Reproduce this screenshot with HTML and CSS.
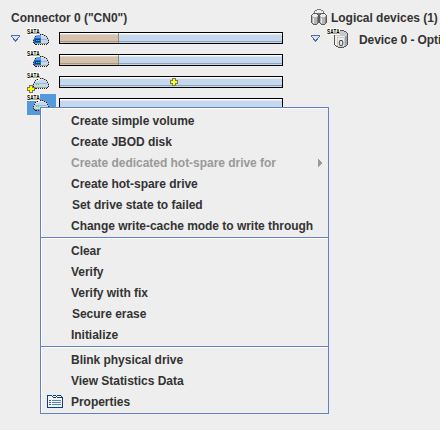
FILE: index.html
```
<!DOCTYPE html>
<html lang="en">
<head>
<meta charset="utf-8">
<title>Storage Manager</title>
<link rel="stylesheet" href="styles.css">
</head>
<body>
<svg class="defs" width="0" height="0" aria-hidden="true">
  <symbol id="dome" viewBox="0 0 16 11">
    <path fill="#c6d8ed" d="M5 0h6v1h2v1h1v2h1v6H1V4h1V2h1V1h2z"/>
    <path fill="#e6eef7" d="M5 1h5v1H5zM3 2h3v1H3z"/>
    <path fill="#9bb5db" d="M2 5h12v1H2z"/>
    <path fill="#a8a48c" d="M5 0h6v1H5zM3 1h1v1H3zM12 1h1v1h-1zM1 3h1v1H1zM14 3h1v1h-1zM0 5h1v1H0zM15 5h1v1h-1zM0 7h1v1H0zM15 7h1v1h-1zM2 9h12v1H2z"/>
    <path fill="#202020" d="M5 0h1v1H5zM7 0h1v1H7zM9 0h1v1H9zM4 1h1v1H4zM11 1h1v1h-1zM2 2h1v1H2zM13 2h1v1h-1zM1 4h1v1H1zM14 4h1v1h-1zM0 6h1v1H0zM15 6h1v1h-1zM0 8h1v1H0zM15 8h1v1h-1zM1 9h1v1H1zM14 9h1v1h-1zM2 10h2v1H2zM5 10h1v1H5zM7 10h1v1H7zM9 10h1v1H9zM11 10h1v1h-1zM13 10h1v1h-1z"/>
  </symbol>
  <symbol id="lights" viewBox="0 0 16 11"><path fill="#00ff30" d="M3 6h1v1H3zM5 6h1v1H5z"/></symbol>
  <symbol id="used" viewBox="0 0 16 11"><path fill="#58a2ff" d="M4 1h4v4H2V3h1V2h1z"/><path fill="#2468d8" d="M1 4h7v5H1z"/><path fill="#073a98" d="M2 5h5v3H2z"/><path fill="#1a8a70" d="M3 6h4v1H3z"/></symbol>
  <symbol id="plus" viewBox="0 0 8 8"><path fill="#74776c" d="M2 0h4v2h2v4H6v2H2V6H0V2h2z"/><path fill="#ffff00" d="M3 1h2v2h2v2H5v2H3V5H1V3h2z"/></symbol>
  <symbol id="twist" viewBox="0 0 9 7"><path fill="#536ba5" d="M0 0h9v2H8v1H7v2H6v1H5v1H4V6H3V5H2V3H1V2H0z"/><path fill="#d8e4f8" d="M1 1h7v1H7v1H6v1H5v1H4V4H3V3H2V2H1z"/></symbol>
</svg>
<main class="panes">
  <section class="pane connector">
    <h1 class="title">Connector 0 ("CN0")</h1>
    <div class="row">
      <svg class="twist"><use href="#twist"/></svg>
      <span class="icon"><span class="tag"><b>SATA</b></span><svg class="drive"><use href="#dome"/><use href="#used"/><use href="#lights"/></svg></span>
      <span class="bar"><i class="taken"></i></span>
    </div>
    <div class="row">
      <span class="twist"></span>
      <span class="icon"><span class="tag"><b>SATA</b></span><svg class="drive"><use href="#dome"/><use href="#used"/><use href="#lights"/></svg></span>
      <span class="bar"><i class="taken"></i></span>
    </div>
    <div class="row">
      <span class="twist"></span>
      <span class="icon"><span class="tag"><b>SATA</b></span><svg class="drive"><use href="#dome"/><use href="#lights"/></svg><svg class="spare"><use href="#plus"/></svg></span>
      <span class="bar"><svg class="plus"><use href="#plus"/></svg></span>
    </div>
    <div class="row">
      <span class="twist"></span>
      <span class="icon selected"><span class="tag"><b>SATA</b></span><svg class="drive"><use href="#dome"/><use href="#lights"/></svg></span>
      <span class="bar"></span>
    </div>
  </section>
  <section class="pane logical">
    <div class="head">
      <svg class="disks" viewBox="0 0 16 16">
        <path fill="#777" d="M6 0h4v1h2v1h1v4H3V2h1V1h2z"/><path fill="#eee" d="M6 1h4v1h2v2H4V2h2z"/>
        <path fill="#595959" d="M2 4h4v1h1v1h1v8H7v1H6v1H2v-1H1v-1H0V6h1V5h1z"/><path fill="#b5b5b5" d="M1 7h6v7H6v1H2v-1H1z"/><path fill="#eee" d="M2 5h4v1h1v1H6v1H2V7H1V6h1zM2 9h1v5H2z"/><path fill="#858585" d="M6 8h1v6H6z"/>
        <path fill="#595959" d="M10 4h4v1h1v1h1v8h-1v1h-1v1h-4v-1H9v-1H8V6h1V5h1z"/><path fill="#b5b5b5" d="M9 7h6v7h-1v1h-4v-1H9z"/><path fill="#eee" d="M10 5h4v1h1v1h-1v1h-4V7H9V6h1zM10 9h1v5h-1z"/><path fill="#858585" d="M14 8h1v6h-1z"/>
      </svg>
      <h2 class="title">Logical devices (1)</h2>
    </div>
    <div class="row">
      <svg class="twist"><use href="#twist"/></svg>
      <span class="icon"><span class="tag"><b>SATA</b></span>
        <svg class="volume" viewBox="0 0 14 18">
          <path fill="#555" d="M4 0h6v1h2v1h1v1h1v12h-1v1h-1v1h-2v1H4v-1H2v-1H1v-1H0V3h1V2h1V1h2z"/>
          <path fill="#c9c9c9" d="M4 1h6v1h2v1h1v12h-1v1h-2v1H4v-1H2v-1H1V3h1V2h2z"/>
          <path fill="#efefef" d="M1 6h2v9H1zM3 6h8v1H3z"/>
          <path fill="#a4a4a4" d="M11 6h2v9h-1v1h-1z"/>
          <path fill="#eee" d="M4 8h6v8H4z"/>
          <text class="digit" x="7" y="15.5">0</text>
        </svg>
      </span>
      <span class="device">Device 0 - Opti</span>
    </div>
  </section>
</main>
<div class="menu">
  <div class="item"><span>Create simple volume</span></div>
  <div class="item"><span>Create JBOD disk</span></div>
  <div class="item off"><span>Create dedicated hot-spare drive for</span><svg class="more" viewBox="0 0 4 8"><path d="M0 0h1v1h1v1h1v1h1v2H3v1H2v1H1v1H0z"/></svg></div>
  <div class="item"><span>Create hot-spare drive</span></div>
  <div class="item nudge"><span>Set drive state to failed</span></div>
  <div class="item"><span>Change write-cache mode to write through</span></div>
  <div class="sep"></div>
  <div class="item"><span>Clear</span></div>
  <div class="item"><span>Verify</span></div>
  <div class="item"><span>Verify with fix</span></div>
  <div class="item nudge"><span>Secure erase</span></div>
  <div class="item"><span>Initialize</span></div>
  <div class="sep"></div>
  <div class="item"><span>Blink physical drive</span></div>
  <div class="item"><span>View Statistics Data</span></div>
  <div class="item with-icon"><svg class="props" viewBox="0 0 16 13"><path fill="#f2f6fa" d="M1 1h14v11H1z"/><path fill="#123f70" d="M0 0h5v1H1v11h14V2h1v11H0zM5 1h1v1H5zM6 0h3v1H6zM9 1h1v1H9zM10 0h4v1h-4zM14 1h1v1h-1zM6 2h3v1H6zM10 2h5v1h-5z"/><path fill="#315f8e" d="M2 5h2v1H2zM2 7h2v1H2zM2 9h2v1H2z"/><path fill="#5685ae" d="M5 5h9v1H5zM5 7h9v1H5zM5 9h9v1H5z"/></svg><span>Properties</span></div>
</div>
</body>
</html>
```
FILE: styles.css
```
* { box-sizing: border-box; }
body {
  margin: 0;
  width: 440px;
  height: 430px;
  overflow: hidden;
  background: #eee;
  color: #333;
  font: bold 12px/14px "Liberation Sans", Arial, sans-serif;
  letter-spacing: -0.03px;
}
svg { display: block; shape-rendering: crispEdges; }
.defs { position: absolute; }
.panes { display: flex; }
.pane { flex: none; padding-top: 10px; }
.connector { width: 300px; padding-left: 11px; }
.logical { width: 140px; padding-left: 11px; }
.title { margin: 0; font: inherit; height: 18px; line-height: 16px; white-space: nowrap; }
.head { display: flex; gap: 4px; height: 18px; }
.disks { width: 16px; height: 16px; margin-top: -1px; flex: none; }
.row { display: flex; height: 22px; }
.twist { width: 9px; height: 7px; margin: 7px 7px 0 0; flex: none; }
.icon { position: relative; width: 29px; height: 21px; flex: none; }
.selected { background: #5599dd; }
.tag {
  position: absolute;
  left: 0;
  top: 0;
  z-index: 1;
  width: 13px;
  height: 7px;
  background: #fffff0;
}
.tag b {
  display: block;
  width: 20px;
  color: #000;
  font: bold 7.5px/7px "Liberation Sans", Arial, sans-serif;
  letter-spacing: 0.3px;
  transform: scaleX(0.62);
  transform-origin: 0 0;
}
.drive { position: absolute; left: 6px; top: 6px; width: 16px; height: 11px; }
.spare { position: absolute; left: 0; top: 13px; width: 8px; height: 8px; }
.volume { position: absolute; left: 7px; top: 2px; width: 14px; height: 18px; }
.digit { font: 9px "Liberation Sans", Arial, sans-serif; text-anchor: middle; fill: #111; }
.bar {
  width: 224px;
  height: 12px;
  margin: 4px 0 0 3px;
  border: 1px solid #000;
  background: linear-gradient(#fff 1px, #e2e8f2 1px 2px, #c6d8ed 2px 8px, #8fa3bd 8px 9px, #c6d8ed 9px);
  display: flex;
}
.taken {
  width: 59px;
  height: 10px;
  border-right: 1px solid #98877b;
  background: linear-gradient(#fff 1px, #e2d5c8 1px 2px, #d5c0ab 2px 8px, #aa988a 8px 9px, #d5c0ab 9px);
}
.plus { width: 8px; height: 8px; margin: 1px 0 0 110px; }
.device { margin-left: 3px; line-height: 24px; white-space: nowrap; letter-spacing: -0.07px; }
.menu {
  position: absolute;
  left: 40px;
  top: 107px;
  width: 289px;
  height: 307px;
  padding: 2px 1px 1px;
  border: 1px solid #6382bf;
  background: #eee;
  box-shadow: inset 1px 1px #fff;
}
.item { display: flex; align-items: center; height: 21px; padding-left: 29px; white-space: nowrap; }
.nudge { padding-left: 30px; }
.sep { height: 2px; margin: 1px -1px; background: linear-gradient(#6382bf 1px, #fff 1px); }
.off { color: #999; }
.more { width: 4px; height: 8px; margin: 0 5px 0 auto; fill: #999; }
.with-icon { padding-left: 5px; gap: 8px; }
.props { width: 16px; height: 13px; }
```
